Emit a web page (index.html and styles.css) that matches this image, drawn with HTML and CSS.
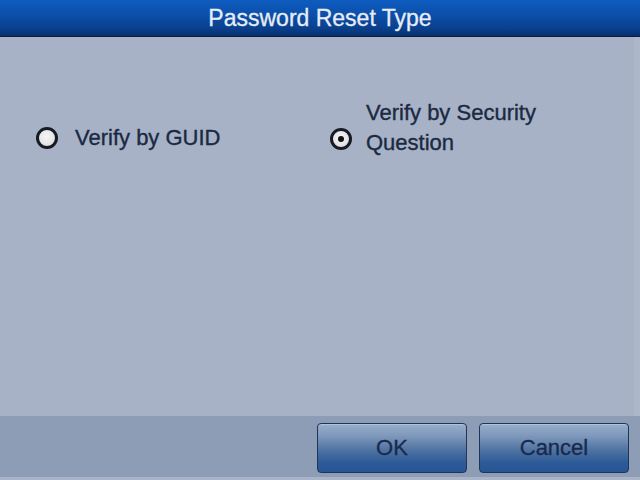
FILE: index.html
```html
<!DOCTYPE html>
<html>
<head>
<meta charset="utf-8">
<link rel="stylesheet" href="styles.css">
</head>
<body>
<div class="dialog">
  <div class="titlebar">Password Reset Type</div>
  <div class="content">
    <div class="options">
      <div class="option option-guid">
        <span class="radio"></span>
        <span class="label">Verify by GUID</span>
      </div>
      <div class="option option-question">
        <span class="radio checked"></span>
        <span class="label">Verify by Security<br>Question</span>
      </div>
    </div>
  </div>
  <div class="footer">
    <button class="btn">OK</button>
    <button class="btn">Cancel</button>
  </div>
  <div class="bottom-edge"></div>
</div>
</body>
</html>
```

FILE: styles.css
```css
html, body {
  margin: 0;
  padding: 0;
}
body {
  width: 640px;
  height: 480px;
  overflow: hidden;
  font-family: "Liberation Sans", Arial, sans-serif;
  background: #a7b2c6;
}
.dialog {
  width: 640px;
  height: 480px;
  display: flex;
  flex-direction: column;
}
.titlebar {
  height: 36px;
  line-height: 37px;
  text-align: center;
  font-size: 23px;
  color: #e8edf5;
  -webkit-text-stroke: 0.3px #e8edf5;
  background: linear-gradient(to bottom, #0e5cc0 0%, #0b4ea8 45%, #0a3f8c 80%, #082f6a 100%);
  border-bottom: 1px solid #061f48;
}
.content {
  height: 379px;
  background: #a7b2c6;
  border-right: 6px solid #adb7ca;
}
.options {
  display: grid;
  grid-template-columns: 294px 1fr;
  padding: 61px 0 0 36px;
  color: #1b2942;
  font-size: 22px;
  line-height: 30px;
  -webkit-text-stroke: 0.35px #1b2942;
}
.option {
  display: flex;
  align-items: flex-start;
}
.option-guid {
  padding-top: 25px;
  gap: 17px;
}
.option-guid .radio {
  margin-top: 4px;
}
.option-question {
  gap: 14px;
}
.option-question .radio {
  margin-top: 30px;
}
.radio {
  flex: none;
  width: 16px;
  height: 16px;
  border-radius: 50%;
  border: 3px solid #151a24;
  background: radial-gradient(circle at 45% 40%, #f6f6f6 0%, #e4e4e4 60%, #cdcdcd 100%);
  position: relative;
}
.radio.checked::after {
  content: "";
  position: absolute;
  left: 50%;
  top: 50%;
  width: 6px;
  height: 6px;
  margin: -3px 0 0 -3px;
  border-radius: 50%;
  background: #111;
}
.footer {
  height: 61px;
  background: #8d9db5;
  display: flex;
  justify-content: flex-end;
  align-items: flex-start;
  gap: 12px;
  padding: 7px 11px 0 0;
  box-sizing: border-box;
}
.btn {
  width: 150px;
  height: 50px;
  border: 1.5px solid #1f3556;
  border-radius: 4px;
  background: linear-gradient(to bottom, #98aecb 0%, #7e98bb 25%, #4f72a1 55%, #2d5b98 80%, #285594 100%);
  font-family: "Liberation Sans", Arial, sans-serif;
  font-size: 22px;
  color: #182a4b;
  -webkit-text-stroke: 0.3px #182a4b;
  padding: 0;
  box-shadow: inset 0 1px 0 rgba(255,255,255,0.25);
}
.bottom-edge {
  flex: 1;
  background: #a9b4c8;
}
```
